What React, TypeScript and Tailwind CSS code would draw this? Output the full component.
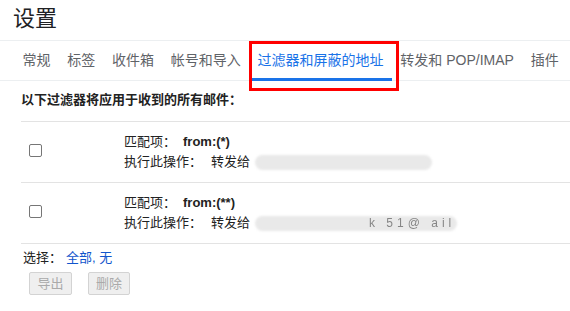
const FONT = "font-['Liberation_Sans','Noto_Sans_CJK_SC',sans-serif]";

const tabs = ["常规", "标签", "收件箱", "帐号和导入", "过滤器和屏蔽的地址", "转发和 POP/IMAP", "插件"];
const ACTIVE = 4;

const filters = [
  { match: "from:(*)", pill: "w-[177px]", leak: false },
  { match: "from:(**)", pill: "w-[202px]", leak: true },
];

function FilterRow({ match, pill, leak }: { match: string; pill: string; leak: boolean }) {
  return (
    <div className="flex h-[61px] items-center border-t border-[#e3e3e3]">
      <div className="-mt-[3px] flex w-[103px] shrink-0 items-center pl-[8px]">
        <span className="h-[13px] w-[13px] rounded-[2px] border border-[#767676] bg-white" />
      </div>
      <div className="text-[13px] leading-[20px] text-[#222]">
        <div className="flex">
          <span>匹配项：</span>
          <span className="ml-[7px] font-bold">{match}</span>
        </div>
        <div className="flex items-center">
          <span>执行此操作：</span>
          <span className="ml-[9px]">转发给</span>
          <span className={`relative ml-[5px] inline-flex h-[15px] ${pill} items-center`}>
            <span className="absolute inset-0 rounded-full bg-[#e9e9e9] blur-[1px]" />
            {leak && (
              <span className="relative pl-[114px] text-[12px] tracking-[4px] text-[#444] opacity-60">
                k 51@ ail
              </span>
            )}
          </span>
        </div>
      </div>
    </div>
  );
}

export default function App() {
  return (
    <div className={`relative h-[311px] w-[570px] overflow-hidden bg-white ${FONT}`}>
      <h1 className="h-[40px] pl-[13px] pt-[5px] text-[22px] leading-[28px] text-[#202124]">设置</h1>

      <nav className="flex border-y border-[#eceff1] pl-[14px]">
        {tabs.map((t, i) => (
          <div
            key={t}
            className={`-mb-px flex h-[40px] items-center border-b-[3px] px-[8.4px] pt-[2px] text-[14px] ${
              i === ACTIVE ? "border-[#1a73e8] text-[#1a73e8]" : "border-transparent text-[#5f6368]"
            }`}
          >
            <span className="whitespace-nowrap">{t}</span>
          </div>
        ))}
      </nav>

      <div className="pl-[21px]">
        <p className="pb-[11px] pt-[9px] text-[13px] font-bold leading-[20px] text-[#222]">
          以下过滤器将应用于收到的所有邮件：
        </p>

        {filters.map((f) => (
          <FilterRow key={f.match} {...f} />
        ))}

        <div className="border-t border-[#e3e3e3] pt-[4px] text-[13px] leading-[20px]">
          <div className="pl-[2px] text-[#222]">
            选择：
            <span className="ml-[4px] text-[#1155cc]">全部, 无</span>
          </div>
          <div className="mt-[4px] flex gap-[16px] pl-[8px]">
            <button className="h-[23px] w-[43px] rounded-[2px] border border-[#d3d3d3] bg-[#efefef] text-[13px] text-[#aaa]">
              导出
            </button>
            <button className="h-[23px] w-[42px] rounded-[2px] border border-[#d3d3d3] bg-[#efefef] text-[13px] text-[#aaa]">
              删除
            </button>
          </div>
        </div>
      </div>

      {/* annotation box round the active tab */}
      <div className="pointer-events-none absolute left-[249px] top-[41px] h-[50px] w-[150px] border-[3px] border-[#f00]" />
    </div>
  );
}
